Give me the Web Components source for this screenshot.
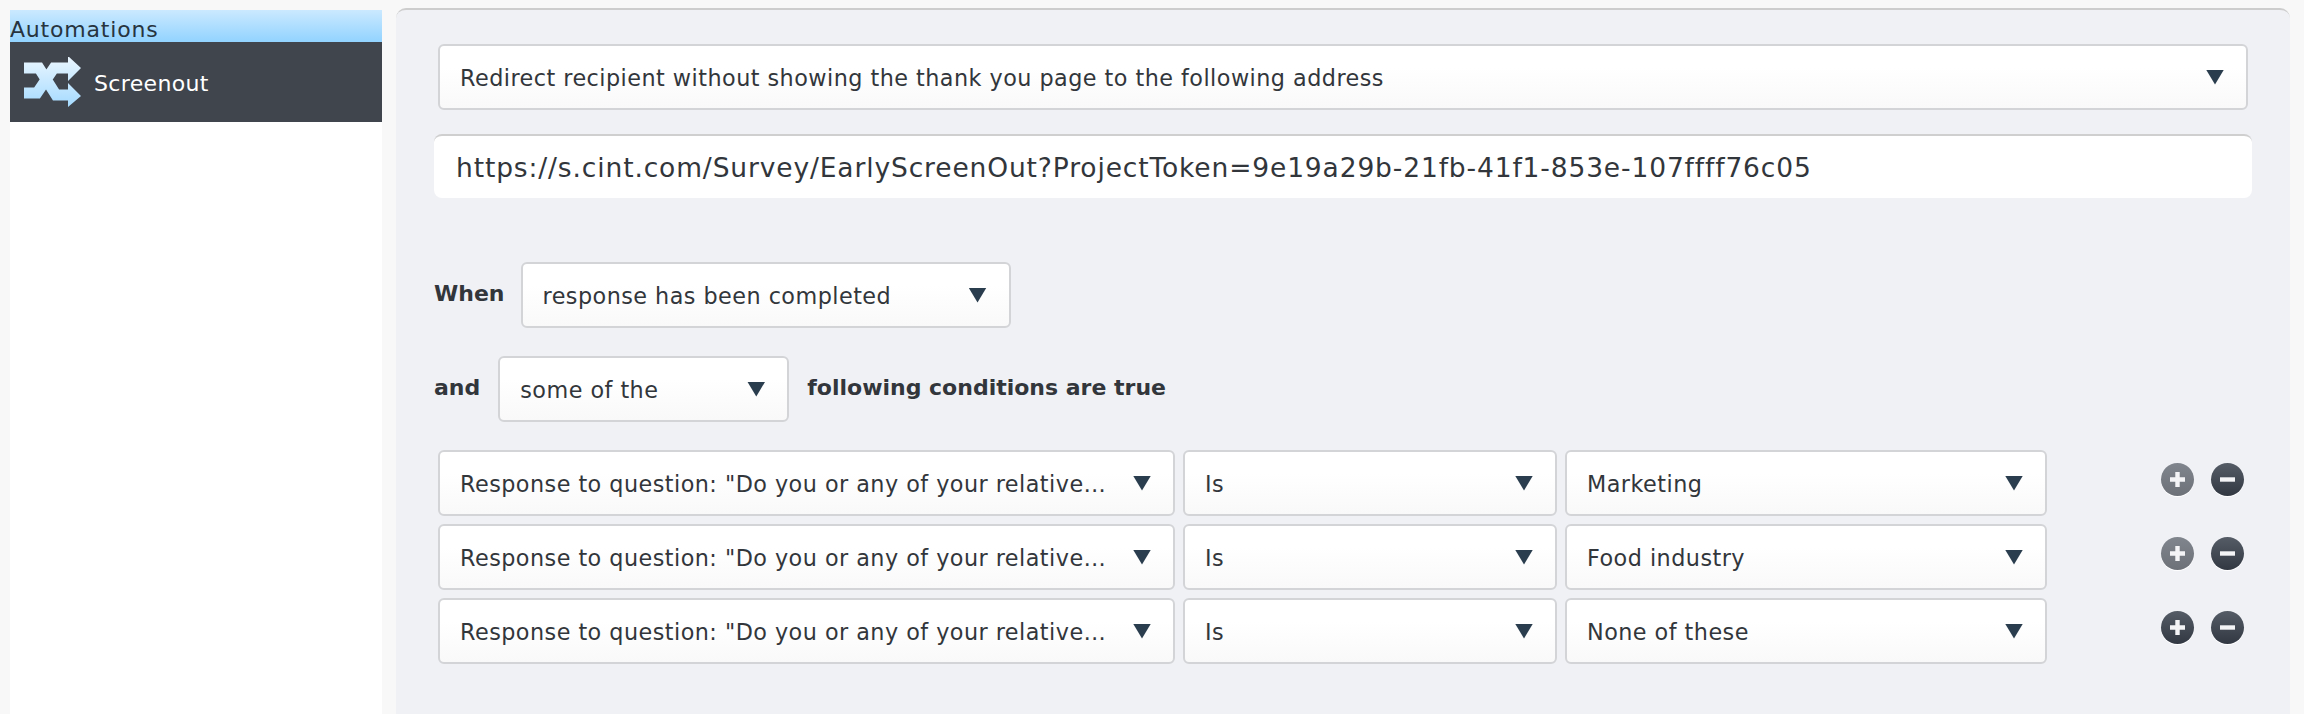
<!DOCTYPE html>
<html>
<head>
<meta charset="utf-8">
<title>Automations</title>
<style>
  html, body { margin: 0; height: 100%; background: #f8f8f8; }
  body { font-family: "DejaVu Sans", sans-serif; color: #32363b; overflow: hidden; }
  form-line b { padding-bottom: 4px; }
</style>
</head>
<body>
<app-shell>
  <side-bar slot="side" heading="Automations">
    <side-item>Screenout</side-item>
  </side-bar>
  <form-panel slot="main">
    <ui-select style="--w:1810px;--mx:4px">Redirect recipient without showing the thank you page to the following address</ui-select>
    <url-field>https://s.cint.com/Survey/EarlyScreenOut?ProjectToken=9e19a29b-21fb-41f1-853e-107ffff76c05</url-field>
    <form-line style="--top:64px;--gap:16px">
      <b>When</b>
      <ui-select style="--w:490px">response has been completed</ui-select>
    </form-line>
    <form-line style="--top:28px;--gap:18px">
      <b>and</b>
      <ui-select style="--w:291px">some of the</ui-select>
      <b>following conditions are true</b>
    </form-line>
    <condition-row style="--top:28px" value="Marketing" plus="dim"></condition-row>
    <condition-row style="--top:8px" value="Food industry" plus="dim"></condition-row>
    <condition-row style="--top:8px" value="None of these"></condition-row>
  </form-panel>
</app-shell>

<script>
  window.customElements.define('app-shell',
    class AppShell extends HTMLElement {
      constructor() {
        super()
        this.attachShadow({ mode: "open" })
        this.shadowRoot.innerHTML = `
          <style>
            :host {
              display: grid;
              grid-template-columns: 372px 1894px;
              column-gap: 14px;
              padding: 8px 14px 0 10px;
              height: 714px;
              box-sizing: border-box;
            }
          </style>
          <slot name="side"></slot>
          <slot name="main"></slot>`
      }
    }
  )

  window.customElements.define('side-bar',
    class SideBar extends HTMLElement {
      constructor() {
        super()
        this.attachShadow({ mode: "open" })
        const heading = this.getAttribute('heading') || ""
        this.shadowRoot.innerHTML = `
          <style>
            :host {
              display: flex;
              flex-direction: column;
              margin-top: 2px;
              background: #fff;
            }
            .head {
              height: 32px;
              line-height: 39px;
              overflow: hidden;
              font-size: 22px;
              letter-spacing: .8px;
              color: #27343f;
              background: linear-gradient(#cbe9ff, #92d3ff);
            }
          </style>
          <div class="head">${heading}</div>
          <slot></slot>`
      }
    }
  )

  window.customElements.define('side-item',
    class SideItem extends HTMLElement {
      constructor() {
        super()
        this.attachShadow({ mode: "open" })
        this.shadowRoot.innerHTML = `
          <style>
            :host {
              display: flex;
              align-items: center;
              height: 80px;
              padding-left: 13px;
              background: #40454d;
              color: #fff;
              font-size: 22px;
              letter-spacing: .35px;
            }
            svg { width: 58px; height: 50px; margin-right: 13px; filter: blur(.6px); }
            span { padding-top: 3px; }
          </style>
          <svg viewBox="23 57 58 50">
            <defs>
              <linearGradient id="g" gradientUnits="userSpaceOnUse" x1="0" y1="57" x2="0" y2="106">
                <stop offset="0" stop-color="#eaf6ff"/>
                <stop offset="1" stop-color="#a6dbff"/>
              </linearGradient>
            </defs>
            <path fill="none" stroke="url(#g)" stroke-width="11" d="M24 68H39L56 95H69M24 93H37L54 68H69"/>
            <path fill="url(#g)" d="M68 56L81 68L68 81ZM68 83L81 96L68 107Z"/>
          </svg>
          <span><slot></slot></span>`
      }
    }
  )

  window.customElements.define('form-panel',
    class FormPanel extends HTMLElement {
      constructor() {
        super()
        this.attachShadow({ mode: "open" })
        this.shadowRoot.innerHTML = `
          <style>
            :host {
              display: flex;
              flex-direction: column;
              align-items: flex-start;
              box-sizing: border-box;
              padding: 34px 38px 0;
              background: #f0f1f5;
              border-top: 2px solid #cdcdcd;
              border-radius: 10px 10px 0 0;
              font-size: 22px;
            }
          </style>
          <slot></slot>`
      }
    }
  )

  window.customElements.define('ui-select',
    class UiSelect extends HTMLElement {
      constructor() {
        super()
        this.attachShadow({ mode: "open" })
        this.shadowRoot.innerHTML = `
          <style>
            :host {
              display: flex;
              align-items: center;
              flex: none;
              box-sizing: border-box;
              width: var(--w, 300px);
              height: 66px;
              margin: 0 var(--mx, 0);
              padding: 0 22px 0 20px;
              background: linear-gradient(#fff 35%, #f9f9f9);
              border: 2px solid #d3d4d7;
              border-radius: 6px;
              color: #32363b;
              font-size: 22.3px;
              font-weight: normal;
              letter-spacing: .47px;
            }
            .label { flex: 1; min-width: 0; padding-top: 2px; white-space: nowrap; overflow: hidden; }
            .arrow {
              flex: none;
              width: 18px;
              height: 15px;
              background: #2a3d4e;
              clip-path: polygon(0 0, 100% 0, 50% 100%);
            }
          </style>
          <span class="label"><slot></slot></span>
          <span class="arrow"></span>`
      }
    }
  )

  window.customElements.define('url-field',
    class UrlField extends HTMLElement {
      constructor() {
        super()
        this.attachShadow({ mode: "open" })
        this.shadowRoot.innerHTML = `
          <style>
            :host {
              display: flex;
              align-items: center;
              box-sizing: border-box;
              align-self: stretch;
              height: 64px;
              margin-top: 24px;
              padding: 1px 0 0 22px;
              background: #fff;
              border-top: 2px solid #cfcfcf;
              border-radius: 8px;
              font-size: 26.5px;
              letter-spacing: .86px;
              white-space: nowrap;
            }
          </style>
          <slot></slot>`
      }
    }
  )

  window.customElements.define('form-line',
    class FormLine extends HTMLElement {
      constructor() {
        super()
        this.attachShadow({ mode: "open" })
        this.shadowRoot.innerHTML = `
          <style>
            :host {
              display: flex;
              align-items: center;
              gap: var(--gap, 17px);
              margin-top: var(--top, 0);
              font-size: 22px;
              font-weight: bold;
            }
          </style>
          <slot></slot>`
      }
    }
  )

  window.customElements.define('round-btn',
    class RoundBtn extends HTMLElement {
      constructor() {
        super()
        this.attachShadow({ mode: "open" })
        const isPlus = this.getAttribute('kind') === "plus"
        this.shadowRoot.innerHTML = `
          <style>
            :host {
              display: block;
              width: 33px;
              height: 33px;
              border-radius: 50%;
              background: linear-gradient(#555c66, #323842);
              box-shadow: 0 1px 0 #fff;
            }
            :host([dim]) { background: linear-gradient(#80858d, #6d7178); }
            svg { display: block; width: 33px; height: 33px; }
          </style>
          <svg viewBox="0 0 33 33">
            <path d="${isPlus ? 'M9 16.5H24M16.5 9V24' : 'M9 16.5H24'}" stroke="#f4f4f6" stroke-width="4.4" fill="none"/>
          </svg>`
      }
    }
  )

  window.customElements.define('condition-row',
    class ConditionRow extends HTMLElement {
      constructor() {
        super()
        this.attachShadow({ mode: "open" })
        const value = this.getAttribute('value') || ""
        const dim = this.getAttribute('plus') === "dim" ? "dim" : ""
        this.shadowRoot.innerHTML = `
          <style>
            :host {
              display: flex;
              gap: 8px;
              margin-top: var(--top, 0);
              margin-left: 4px;
            }
            .btns { display: flex; gap: 17px; margin: 13px 0 0 106px; align-items: flex-start; }
          </style>
          <ui-select style="--w:737px">Response to question: "Do you or any of your relative…</ui-select>
          <ui-select style="--w:374px">Is</ui-select>
          <ui-select style="--w:482px">${value}</ui-select>
          <div class="btns">
            <round-btn kind="plus" ${dim}></round-btn>
            <round-btn kind="minus"></round-btn>
          </div>`
      }
    }
  )
</script>
</body>
</html>
